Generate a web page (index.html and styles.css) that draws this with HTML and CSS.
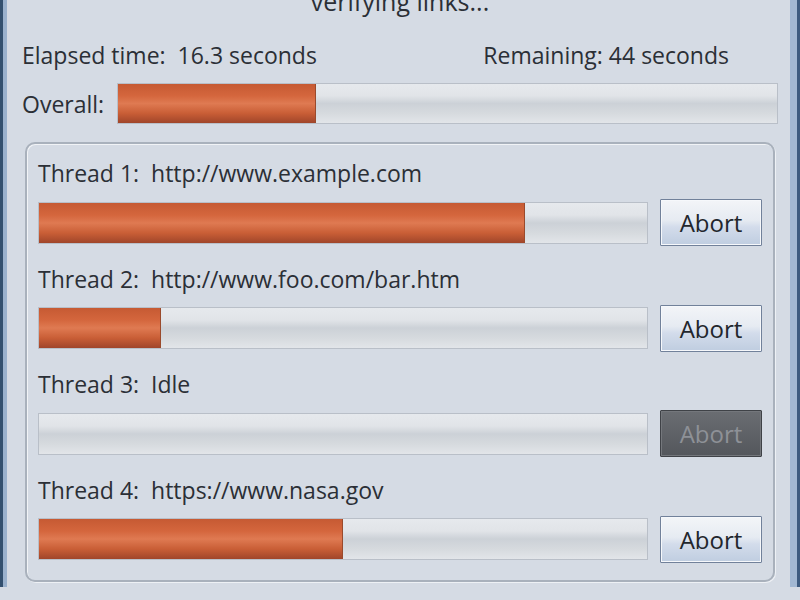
FILE: index.html
```html
<!DOCTYPE html>
<html lang="en">
<head>
  <meta charset="UTF-8" />
  <title>Verifying links</title>
  <link rel="stylesheet" href="styles.css">
</head>
<body>
  <div class="window">
    <div class="client">

      <!-- Header -->
      <h1 class="title">verifying links...</h1>

      <div class="times">
        <span>Elapsed time:&nbsp; 16.3 seconds</span>
        <span>Remaining: 44 seconds</span>
      </div>

      <div class="overall">
        <span>Overall:</span>
        <div class="bar"><div class="fill" style="width: 30%"></div></div>
      </div>

      <!-- Threads -->
      <div class="group">
        <div class="thread">
          <div class="thread-label">Thread 1:&nbsp; http://www.example.com</div>
          <div class="thread-row">
            <div class="bar"><div class="fill" style="width: 80%"></div></div>
            <button class="abort">Abort</button>
          </div>
        </div>

        <div class="thread">
          <div class="thread-label">Thread 2:&nbsp; http://www.foo.com/bar.htm</div>
          <div class="thread-row">
            <div class="bar"><div class="fill" style="width: 20%"></div></div>
            <button class="abort">Abort</button>
          </div>
        </div>

        <div class="thread">
          <div class="thread-label">Thread 3:&nbsp; Idle</div>
          <div class="thread-row">
            <div class="bar"></div>
            <button class="abort" disabled>Abort</button>
          </div>
        </div>

        <div class="thread">
          <div class="thread-label">Thread 4:&nbsp; https://www.nasa.gov</div>
          <div class="thread-row">
            <div class="bar"><div class="fill" style="width: 50%"></div></div>
            <button class="abort">Abort</button>
          </div>
        </div>
      </div>

    </div>
  </div>
</body>
</html>
```

FILE: styles.css
```css
body {
  margin: 0;
  font-family: "Open Sans", "Liberation Sans", sans-serif;
  color: #2b2f36;
  background: #d5dbe4;
  overflow: hidden;
}

.window {
  height: 600px;
  border-left: 3px solid #33506f;
  border-right: 3px solid #3d5b80;
  box-sizing: border-box;
}

.client {
  height: 100%;
  box-sizing: border-box;
  border-left: 4px solid #9ab1cd;
  border-right: 7px solid #a2b8d3;
  padding: 0 12px 0 15px;
  background: #d5dbe4;
}

.title {
  margin: -13px 0 0;
  font-size: 25px;
  font-weight: normal;
  text-align: center;
  line-height: 28px;
}

.times {
  display: flex;
  justify-content: space-between;
  font-size: 23px;
  margin-top: 26px;
  padding-right: 49px;
  line-height: 28px;
}

.overall {
  display: flex;
  align-items: center;
  gap: 13px;
  margin-top: 14px;
  font-size: 23px;
}

.overall .bar {
  height: 41px;
}

.bar {
  flex: 1;
  height: 42px;
  box-sizing: border-box;
  border: 1px solid #b9bfc8;
  background: linear-gradient(#e6e9ed 0%, #e1e4e8 30%, #ccd1d7 50%, #d6dade 75%, #e2e5e9 100%);
}

.fill {
  height: 100%;
  background: linear-gradient(#c65a33 0%, #d4663d 30%, #df7a52 50%, #c95e36 75%, #a0452a 100%);
  border-right: 1px solid #9a4a2c;
  box-sizing: border-box;
}

.group {
  margin: 18px 3px 0 3px;
  height: 440px;
  box-sizing: border-box;
  border: 2px solid #a9b1bc;
  border-radius: 10px;
  box-shadow: inset 1px 1px 0 #f1f3f6, 1px 1px 0 #eef1f5;
  padding: 15px 11px 0 11px;
}

.thread {
  height: 105.5px;
}

.thread-label {
  font-size: 23px;
  line-height: 28px;
  margin-bottom: 12px;
}

.thread-row {
  display: flex;
  align-items: center;
  gap: 12px;
}

.abort {
  width: 102px;
  height: 47px;
  font-family: inherit;
  font-size: 24px;
  color: #22262c;
  border: 1px solid #71819a;
  border-radius: 1px;
  background: linear-gradient(#f3f5f8 0%, #e6ebf2 45%, #d3dceb 60%, #bfcde0 100%);
  box-shadow: inset 0 0 0 1px #f6f8fb;
}

.abort:disabled {
  color: #8e9197;
  border-color: #3f4247;
  background: linear-gradient(#6a6d72, #54575c);
  box-shadow: inset 0 0 0 1px #74777c;
}
```
